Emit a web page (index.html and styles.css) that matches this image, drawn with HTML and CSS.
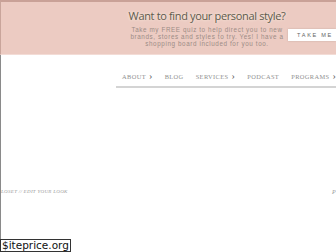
FILE: index.html
```html
<!DOCTYPE html>
<html lang="en">

<head>
  <meta charset="UTF-8">
  <meta name="viewport" content="width=device-width, initial-scale=1">
  <title>Want to find your personal style?</title>
  <link rel="stylesheet" href="styles.css">
</head>

<body>
  <div class="promo">
    <div class="promo__text">
      <h2 class="promo__title">Want to find your personal style?</h2>
      <p class="promo__copy">Take my FREE quiz to help direct you to new brands, stores and styles to try. Yes! I have a shopping board included for you too.</p>
    </div>
    <a href="#" class="promo__button">TAKE ME TO THE QUIZ</a>
  </div>

  <div class="page">
    <nav class="navigation">
      <ul class="navigation__list">
        <li class="navigation__item"><a href="#" class="navigation__link">About <span class="chev">&#x203A;</span></a></li>
        <li class="navigation__item"><a href="#" class="navigation__link">Blog</a></li>
        <li class="navigation__item"><a href="#" class="navigation__link">Services <span class="chev">&#x203A;</span></a></li>
        <li class="navigation__item"><a href="#" class="navigation__link">Podcast</a></li>
        <li class="navigation__item"><a href="#" class="navigation__link">Programs <span class="chev">&#x203A;</span></a></li>
      </ul>
    </nav>

    <div class="tagline">
      <span class="tagline__left">loset // edit your look</span>
      <span class="tagline__right">P</span>
    </div>
  </div>

  <div class="watermark">$iteprice.org</div>
</body>

</html>
```

FILE: styles.css
```css
* {
  box-sizing: border-box;
  padding: 0;
  margin: 0;
}

body {
  font-family: "Liberation Serif", serif;
  background-color: #fff;
  width: 336px;
  height: 252px;
  overflow: hidden;
}

/* pink banner on top */
.promo {
  background-color: #eccbc2;
  border-top: 2px solid #c9a197;
  border-left: 1px solid #c9a59b;
  border-bottom: 1px solid #f3dcd6;
  height: 55px;
  display: flex;
  align-items: flex-start;
  padding-left: 126px;
}

.promo__text {
  width: 160px;
  text-align: center;
  padding-top: 6px;
}

.promo__title {
  font-family: "Open Sans", sans-serif;
  font-weight: 400;
  font-size: 11px;
  letter-spacing: -0.35px;
  color: #5d5a4c;
  text-shadow: 0 0 3px #fff7e8;
  line-height: 16px;
  white-space: nowrap;
}

.promo__copy {
  font-family: "Liberation Sans", sans-serif;
  font-size: 6.3px;
  letter-spacing: 0.6px;
  line-height: 7.2px;
  color: #9c8b86;
  margin-top: 2px;
  padding: 0 2px;
}

.promo__button {
  margin-top: 27px;
  margin-left: 1px;
  background-color: #fff;
  height: 12px;
  padding-left: 9px;
  display: flex;
  align-items: center;
  font-family: "Liberation Sans", sans-serif;
  font-size: 5.6px;
  letter-spacing: 1.7px;
  color: #666;
  text-decoration: none;
  white-space: nowrap;
  flex: 1;
  overflow: hidden;
  box-shadow: 0 0 2px rgba(0, 0, 0, 0.15);
}

/* rest of the page */
.page {
  border-left: 1px solid #8a8a8a;
  height: 184px;
}

.navigation {
  margin-left: 115px;
  padding-top: 18px;
  border-bottom: 2px solid #d4d4d4;
  height: 33px;
}

.navigation__list {
  display: flex;
  list-style: none;
  padding-left: 6px;
  font-size: 6.4px;
  line-height: 8px;
}

.navigation__item {
  margin-right: 12px;
}

.navigation__link {
  letter-spacing: 0.4px;
  text-transform: uppercase;
  color: #8f8f8f;
  text-decoration: none;
  white-space: nowrap;
}

.chev {
  font-size: 10px;
  line-height: 6px;
  margin-left: 1px;
  color: #666;
}

.tagline {
  display: flex;
  justify-content: space-between;
  margin-top: 101px;
  font-size: 5px;
  font-style: italic;
  text-transform: uppercase;
  letter-spacing: 0.3px;
  color: #9a9a9a;
}

.tagline__right {
  font-size: 6px;
}

.watermark {
  position: absolute;
  left: 0;
  top: 239px;
  font-family: "DejaVu Sans", sans-serif;
  font-size: 10.5px;
  line-height: 11px;
  color: #111;
  background-color: #fff;
  border: 1px solid #333;
  padding: 0 1px;
}
```
